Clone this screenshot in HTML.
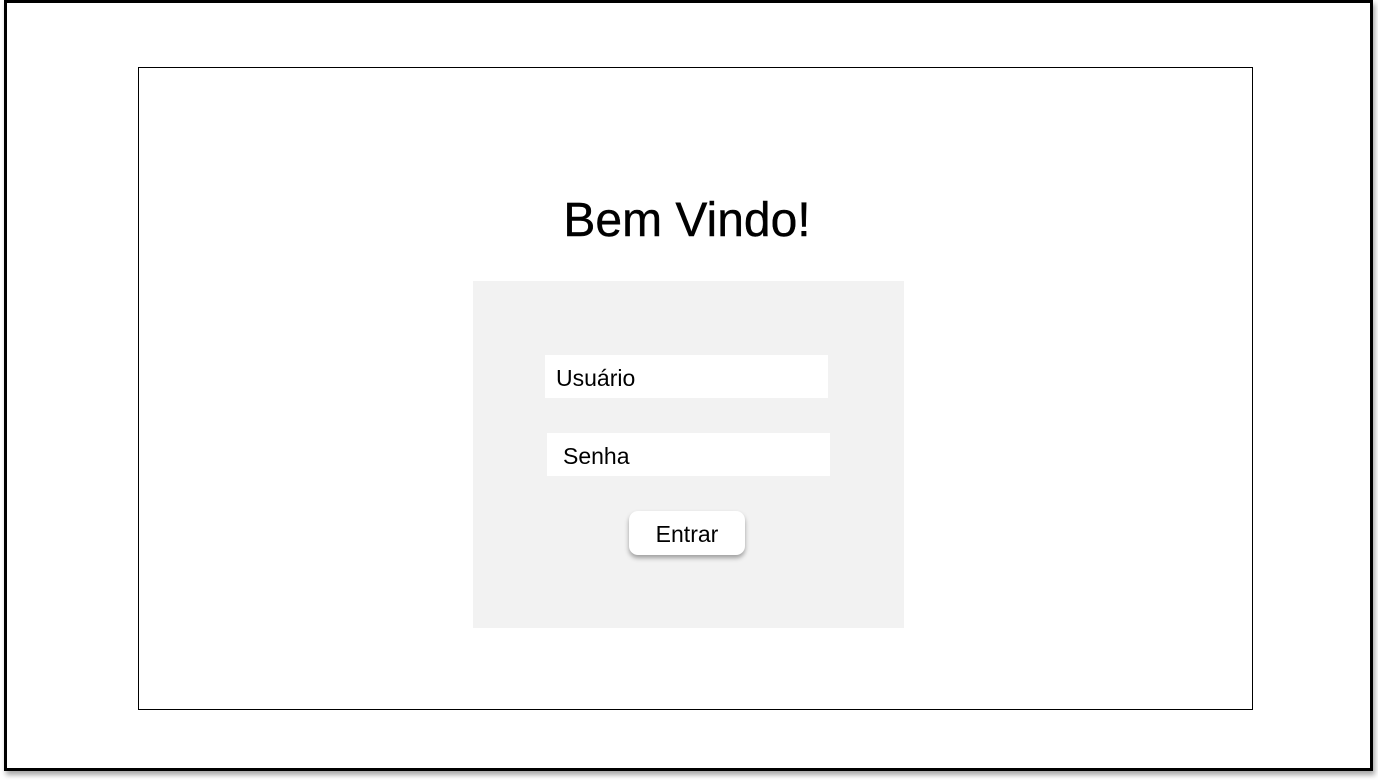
<!DOCTYPE html>
<html><head><meta charset="utf-8"><style>
html,body{margin:0;padding:0;background:#fff;width:1378px;height:780px;overflow:hidden;font-family:"Liberation Sans",sans-serif;}
.outer{position:absolute;left:4px;top:0;width:1363px;height:765px;border:3px solid #000;box-shadow:2px 4px 5px rgba(0,0,0,.35);}
.inner{position:absolute;left:138px;top:67px;width:1113px;height:641px;border:1px solid #000;}
h1{position:absolute;left:0;width:1374px;top:193px;margin:0;text-align:center;font-weight:normal;font-size:48px;line-height:56px;-webkit-text-stroke:0.4px #000;}
.panel{position:absolute;left:473px;top:281px;width:431px;height:347px;background:#f2f2f2;}
.f{position:absolute;background:#fff;height:43px;width:283px;font-size:23px;line-height:47px;}
.btn{position:absolute;left:629px;top:511px;width:116px;height:44px;background:#fff;border-radius:9px;box-shadow:0 3px 5px rgba(0,0,0,.35);text-align:center;font-size:23px;line-height:46px;}
</style></head><body>
<div class="outer"></div>
<div class="inner"></div>
<h1>Bem Vindo!</h1>
<div class="panel"></div>
<div class="f" style="left:545px;top:355px;padding-left:11px;width:272px">Usuário</div>
<div class="f" style="left:547px;top:433px;padding-left:16px;width:267px">Senha</div>
<div class="btn">Entrar</div>
</body></html>
